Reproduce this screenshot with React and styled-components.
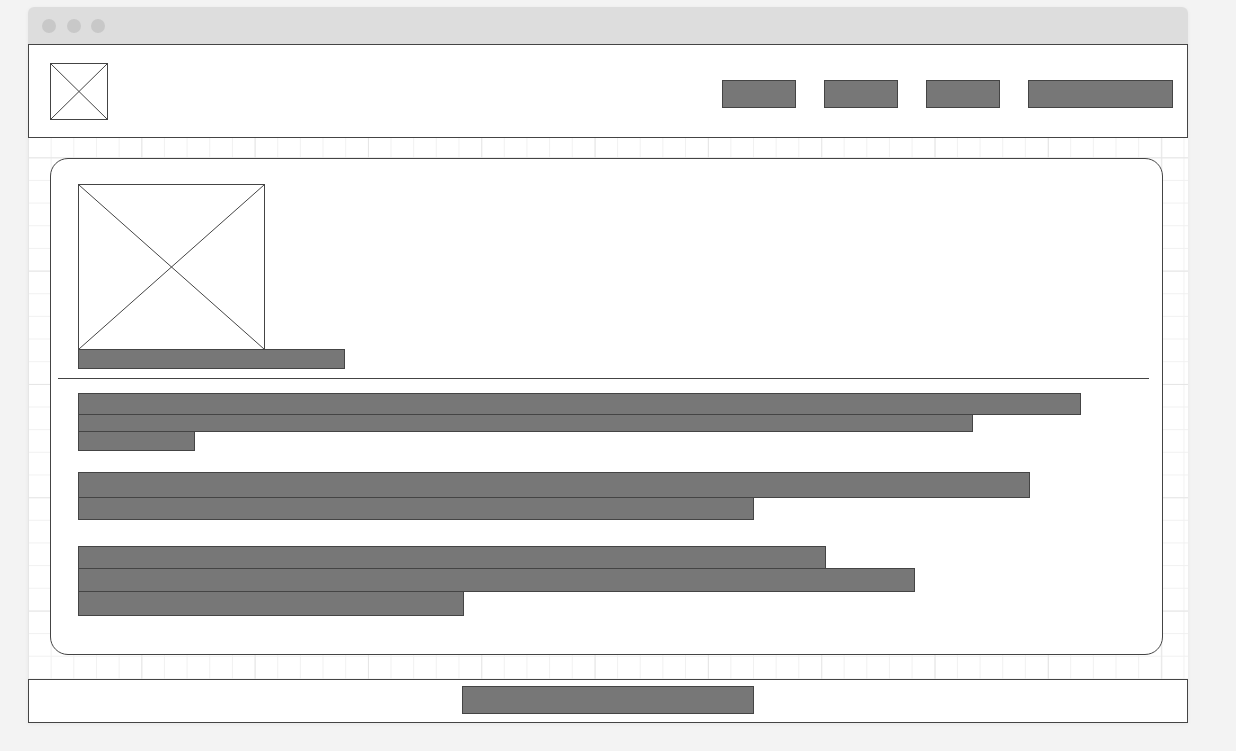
import React from "react";
import styled, { createGlobalStyle } from "styled-components";

const GlobalStyle = createGlobalStyle`
  html, body {
    margin: 0;
    padding: 0;
    background: #f3f3f3;
    font-family: "Liberation Sans", Arial, sans-serif;
  }
`;

const Page = styled.div`
  padding: 7px 0 0 28px;
  height: 751px;
  box-sizing: border-box;
`;

const Window = styled.div`
  width: 1160px;
  border-radius: 6px 6px 0 0;
  box-shadow: 0 1px 4px rgba(0, 0, 0, 0.05);
`;

const TitleBar = styled.div`
  height: 37px;
  background: #dddddd;
  border-radius: 6px 6px 0 0;
  display: flex;
  align-items: center;
  gap: 10.5px;
  padding-left: 14px;
`;

const Dot = styled.span`
  width: 14px;
  height: 14px;
  border-radius: 50%;
  background: #c8c8c8;
`;

const Body = styled.div`
  background-color: #ffffff;
  background-image:
    linear-gradient(to right, #e6e6e6 1px, transparent 1px),
    linear-gradient(to bottom, #e6e6e6 1px, transparent 1px),
    linear-gradient(to right, #f1f1f1 1px, transparent 1px),
    linear-gradient(to bottom, #f1f1f1 1px, transparent 1px);
  background-size:
    113.33px 113.33px,
    113.33px 113.33px,
    22.667px 22.667px,
    22.667px 22.667px;
`;

const Header = styled.header`
  height: 94px;
  box-sizing: border-box;
  border: 1px solid #444;
  background: #fff;
  display: flex;
  align-items: flex-start;
  padding: 18px 14px 0 21px;
`;

const Nav = styled.nav`
  margin-left: auto;
  margin-top: 17px;
  display: flex;
  gap: 28px;
`;

const Block = styled.div`
  box-sizing: border-box;
  width: ${(p) => p.$w}px;
  height: ${(p) => p.$h}px;
  background: #777777;
  border: 1px solid #444;
  flex-shrink: 0;
`;

const Placeholder = styled.div`
  box-sizing: border-box;
  width: ${(p) => p.$w}px;
  height: ${(p) => p.$h}px;
  border: 1px solid #444;
  background: #fff;
  flex-shrink: 0;

  svg {
    display: block;
    width: 100%;
    height: 100%;
  }
`;

const Main = styled.main`
  padding: 20px 25px 24px 22px;
`;

const Card = styled.section`
  background: #fff;
  border: 1px solid #444;
  border-radius: 18px;
  padding: 25px 13px 38px 7px;
`;

const Hero = styled.div`
  padding-left: 20px;
  display: flex;
  flex-direction: column;
`;

const Caption = styled(Block)`
  margin-top: -1px;
`;

const Divider = styled.hr`
  margin: 9px 0 0;
  border: none;
  border-top: 1px solid #444;
  height: 0;
`;

const Content = styled.div`
  padding-left: 20px;
`;

const Paragraph = styled.div`
  display: flex;
  flex-direction: column;
  margin-top: ${(p) => p.$gap}px;

  & > * + * {
    margin-top: -1px;
  }
`;

const Footer = styled.footer`
  height: 44px;
  box-sizing: border-box;
  border: 1px solid #444;
  background: #fff;
  display: flex;
  justify-content: center;
  padding-top: 6px;
`;

const Cross = () => (
  <svg viewBox="0 0 100 100" preserveAspectRatio="none">
    <line x1="0" y1="0" x2="100" y2="100" stroke="#444" strokeWidth="1" vectorEffect="non-scaling-stroke" />
    <line x1="100" y1="0" x2="0" y2="100" stroke="#444" strokeWidth="1" vectorEffect="non-scaling-stroke" />
  </svg>
);

const navItems = [74, 74, 74, 145];

const paragraphs = [
  { gap: 14, lines: [[1003, 22], [895, 18], [117, 20]] },
  { gap: 21, lines: [[952, 26], [676, 23]] },
  { gap: 26, lines: [[748, 23], [837, 24], [386, 25]] },
];

const App = () => {
  return (
    <>
      <GlobalStyle />
      <Page>
        <Window>
          <TitleBar>
            <Dot />
            <Dot />
            <Dot />
          </TitleBar>
          <Body>
            <Header>
              <Placeholder $w={58} $h={57}>
                <Cross />
              </Placeholder>
              <Nav>
                {navItems.map((w, i) => (
                  <Block key={i} $w={w} $h={28} />
                ))}
              </Nav>
            </Header>

            <Main>
              <Card>
                <Hero>
                  <Placeholder $w={187} $h={166}>
                    <Cross />
                  </Placeholder>
                  <Caption $w={267} $h={20} />
                </Hero>
                <Divider />
                <Content>
                  {paragraphs.map((p, i) => (
                    <Paragraph key={i} $gap={p.gap}>
                      {p.lines.map(([w, h], j) => (
                        <Block key={j} $w={w} $h={h} />
                      ))}
                    </Paragraph>
                  ))}
                </Content>
              </Card>
            </Main>

            <Footer>
              <Block $w={292} $h={28} />
            </Footer>
          </Body>
        </Window>
      </Page>
    </>
  );
};

export default App;
